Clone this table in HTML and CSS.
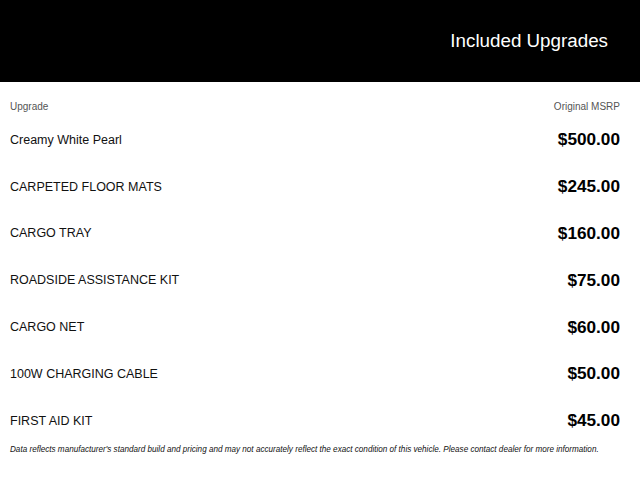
FILE: index.html
```html
<!DOCTYPE html>
<html>
<head>
<meta charset="utf-8">
<link rel="stylesheet" href="styles.css">
</head>
<body>
<header class="banner"><h1 class="title">Included Upgrades</h1></header>
<main class="content">
  <div class="head-row"><span>Upgrade</span><span>Original MSRP</span></div>
  <div class="row"><span class="name">Creamy White Pearl</span><span class="price">$500.00</span></div>
  <div class="row"><span class="name">CARPETED FLOOR MATS</span><span class="price">$245.00</span></div>
  <div class="row"><span class="name">CARGO TRAY</span><span class="price">$160.00</span></div>
  <div class="row"><span class="name">ROADSIDE ASSISTANCE KIT</span><span class="price">$75.00</span></div>
  <div class="row"><span class="name">CARGO NET</span><span class="price">$60.00</span></div>
  <div class="row"><span class="name">100W CHARGING CABLE</span><span class="price">$50.00</span></div>
  <div class="row"><span class="name">FIRST AID KIT</span><span class="price">$45.00</span></div>
  <p class="note">Data reflects manufacturer's standard build and pricing and may not accurately reflect the exact condition of this vehicle. Please contact dealer for more information.</p>
</main>
</body>
</html>
```
FILE: styles.css
```css
* { box-sizing: border-box; }
body {
  margin: 0;
  font-family: "Liberation Sans", Arial, sans-serif;
  background: #fff;
  color: #000;
}
.banner {
  height: 82px;
  background: #000;
  display: flex;
  align-items: center;
  justify-content: flex-end;
  padding-right: 32px;
}
.title {
  margin: 0;
  color: #fff;
  font-size: 18.8px;
  font-weight: normal;
  line-height: 22px;
}
.content {
  padding: 14px 20px 0 10px;
}
.head-row {
  display: flex;
  justify-content: space-between;
  align-items: center;
  height: 20px;
  font-size: 10px;
  color: #555;
}
.row {
  display: flex;
  justify-content: space-between;
  align-items: center;
  height: 46.8px;
  padding-top: 1px;
}
.name {
  font-size: 12.5px;
  color: #111;
}
.price {
  font-size: 17.2px;
  font-weight: bold;
}
.note {
  margin: 0;
  font-size: 8.15px;
  line-height: 11px;
  font-style: italic;
  color: #111;
  white-space: nowrap;
}
```
